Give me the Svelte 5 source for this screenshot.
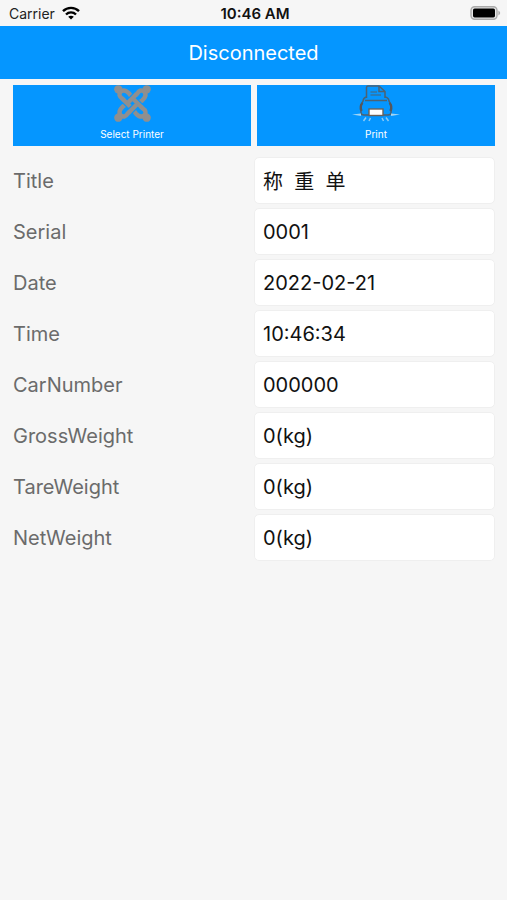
<script>
  let status = $state('Disconnected');

  let fields = $state([
    { id: 'title', label: 'Title', value: '称  重  单' },
    { id: 'serial', label: 'Serial', value: '0001' },
    { id: 'date', label: 'Date', value: '2022-02-21' },
    { id: 'time', label: 'Time', value: '10:46:34' },
    { id: 'car', label: 'CarNumber', value: '000000' },
    { id: 'gross', label: 'GrossWeight', value: '0(kg)' },
    { id: 'tare', label: 'TareWeight', value: '0(kg)' },
    { id: 'net', label: 'NetWeight', value: '0(kg)' }
  ]);

  const turns = [0, 90, 180, 270];
</script>

<div class="statusbar">
  <div class="carrier">
    <span>Carrier</span>
    <svg width="18" height="14" viewBox="0 0 18 14" fill="none" stroke="#000" stroke-width="2.4">
      <path d="M1 5.2C5.4 0.8 12.6 0.8 17 5.2" />
      <path d="M4 8.5C6.8 5.7 11.2 5.7 14 8.5" />
      <path d="M9 13.6L6.2 10.8C7.8 9.3 10.2 9.3 11.8 10.8Z" fill="#000" stroke="none" />
    </svg>
  </div>
  <span class="clock">10:46 AM</span>
  <div class="battery">
    <svg width="31" height="14" viewBox="0 0 31 14">
      <rect x="1" y="0.8" width="26" height="12.4" rx="3.6" fill="#e8e8e8" stroke="#aaa" stroke-width="1.4" />
      <rect x="3" y="2.6" width="22" height="8.8" rx="1.6" fill="#000" />
      <path d="M28.4 4.6Q32 7 28.4 9.4Z" fill="#aaa" />
    </svg>
  </div>
</div>

<header>
  <h1>{status}</h1>
</header>

<main>
  <div class="actions">
    <button type="button">
      <svg width="37" height="37" viewBox="14 9 112 112" fill="none" stroke="#8f8f8f" stroke-width="13.5">
        {#each turns as turn}
          <g transform="rotate({turn} 70 65)">
            <circle cx="27" cy="22" r="12.5" fill="#8f8f8f" stroke="none" />
            <path d="M27 22L36 31" stroke-width="20" />
            <path d="M67 44L60 35Q46 20 34 29Q25 41 39 50L77 88" />
          </g>
        {/each}
        <!-- over-crossings of the knot -->
        {#each turns as turn}
          <g transform="rotate({turn} 70 65)">
            <path d="M44 55L64 75" stroke="#0596ff" stroke-width="20" />
            <path d="M41 52L67 78" />
          </g>
        {/each}
      </svg>
      <span>Select Printer</span>
    </button>
    <button type="button">
      <svg width="48" height="37" viewBox="0 0 48 37" fill="none">
        <g stroke="#4d6272" stroke-width="1.5">
          <path d="M14.5 13V2.6Q14.5 1 16 1H27L33 6.5V13" />
          <path d="M27 1V6.5H33" />
          <path d="M18.5 7H25M18.5 10H29" stroke-width="1.2" />
          <path d="M14.5 12Q11.5 12.5 11 16L9 20V27.5Q9 30 12 30H36Q39 30 39 27.5V20L37 16Q36.5 12.5 33 12" />
          <path d="M13 15.5H35" />
        </g>
        <path d="M10.5 18Q7.5 21 9.5 26M37.5 18Q40.5 21 38.5 26" stroke="#55565c" stroke-width="2.4" />
        <path d="M0 29.5L9 28.5V31ZM48 29.5L39 28.5V31Z" fill="#9fd4f5" />
        <rect x="17" y="24" width="14" height="6.5" fill="#fff" stroke="#6b6259" stroke-width="1.4" />
        <path d="M14 32.5L11.5 36M18.5 33L17 36M30 33L31.5 36M34 32.5L36.5 36" stroke="#8ccbf5" stroke-width="1.5" />
      </svg>
      <span>Print</span>
    </button>
  </div>

  <form>
    {#each fields as field (field.id)}
      <div class="row">
        <label for={field.id}>{field.label}</label>
        <input id={field.id} type="text" bind:value={field.value} />
      </div>
    {/each}
  </form>
</main>

<style>
  :global(body) {
    margin: 0;
    background: #f6f6f6;
    font-family: Inter, "Noto Sans CJK SC", sans-serif;
  }
  svg {
    display: block;
  }
  .statusbar {
    display: grid;
    grid-template-columns: 1fr auto 1fr;
    align-items: center;
    height: 26px;
    padding: 0 6px 0 9px;
    font-size: 14px;
    color: #222;
  }
  .carrier {
    display: flex;
    align-items: center;
    gap: 7px;
  }
  .clock {
    font-size: 15px;
    font-weight: 600;
    color: #111;
  }
  .battery {
    justify-self: end;
  }
  header {
    display: flex;
    align-items: center;
    justify-content: center;
    height: 53px;
    background: #0596ff;
  }
  h1 {
    margin: 0;
    font-size: 20px;
    font-weight: 400;
    color: #fff;
  }
  main {
    padding: 6px 12px 0 13px;
  }
  .actions {
    display: grid;
    grid-template-columns: 1fr 1fr;
    gap: 6px;
  }
  button {
    display: flex;
    flex-direction: column;
    align-items: center;
    gap: 6px;
    height: 61px;
    margin: 0;
    padding: 0;
    border: 0;
    background: #0596ff;
    color: #fff;
    font-family: inherit;
    font-size: 10px;
    line-height: 12px;
  }
  form {
    display: grid;
    gap: 4px;
    padding-top: 11px;
  }
  .row {
    display: grid;
    grid-template-columns: 1fr 1fr;
    align-items: center;
  }
  label {
    font-size: 20px;
    color: #6b6b6b;
  }
  input {
    box-sizing: border-box;
    width: 100%;
    height: 47px;
    margin: 0;
    padding: 0 8px;
    border: 1px solid #efefef;
    border-radius: 5px;
    background: #fff;
    color: #111;
    font-family: inherit;
    font-size: 20px;
  }
</style>
